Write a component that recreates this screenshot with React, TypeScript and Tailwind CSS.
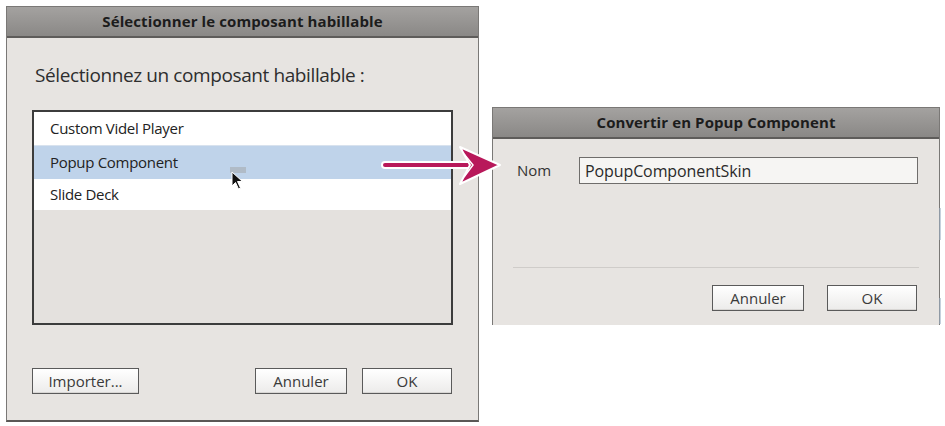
import React from "react";

const font = { fontFamily: '"Open Sans", "Noto Sans", sans-serif' };

function Btn({ label, w }: { label: string; w: string }) {
  return (
    <div
      className={`h-[26px] ${w} flex items-center justify-center border border-[#5a5a5a] bg-gradient-to-b from-[#ffffff] to-[#ecebea] text-[15px] text-[#3a3a3a] shadow-[inset_0_-1px_0_#d8d6d4]`}
    >
      {label}
    </div>
  );
}

function TitleBar({ text }: { text: string }) {
  return (
    <div className="h-[31px] flex items-center justify-center bg-gradient-to-b from-[#a4a2a0] to-[#8a8886] border-b-2 border-[#5e5c5a] text-[15px] font-bold text-[#1c1c1c] tracking-[0.1px]">
      {text}
    </div>
  );
}

export default function App() {
  return (
    <div
      className="relative w-[945px] h-[426px] bg-white overflow-hidden"
      style={font}
    >
      <div className="flex items-start pl-[6px] pt-[6px] gap-[13px]">
        {/* Left dialog */}
        <div className="w-[473px] h-[416px] flex flex-col bg-[#e7e4e1] border border-[#7a7876] border-b-2 border-b-[#5a5856]">
          <TitleBar text="Sélectionner le composant habillable" />
          <div className="flex-1 flex flex-col pl-[25px] pr-[25px]">
            <div className="mt-[24px] h-[26px] flex items-center pl-[3px] text-[19px] text-[#2e2e2e] tracking-[-0.4px]">
              Sélectionnez un composant habillable :
            </div>
            <div className="mt-[22px] w-[421px] h-[215px] border-2 border-[#3c3c3c] bg-[#e4e1de] flex flex-col">
              <div className="h-[33px] bg-white flex items-center pl-[16px] text-[15px] text-[#222] tracking-[-0.3px]">
                Custom Videl Player
              </div>
              <div className="h-[34px] bg-[#bfd3ea] border-t border-[#d8e2ee] flex items-center pl-[16px] text-[15px] text-[#222] tracking-[-0.3px]">
                Popup Component
              </div>
              <div className="h-[31px] bg-white flex items-center pl-[16px] text-[15px] text-[#222] tracking-[-0.3px]">
                Slide Deck
              </div>
            </div>
            <div className="mt-[43px] flex items-center">
              <Btn label="Importer..." w="w-[107px]" />
              <div className="ml-auto flex gap-[15px] mr-[1px]">
                <Btn label="Annuler" w="w-[92px]" />
                <Btn label="OK" w="w-[90px]" />
              </div>
            </div>
          </div>
        </div>

        {/* Right dialog */}
        <div className="mt-[101px] w-[448px] h-[218px] flex flex-col bg-[#e7e4e1] border-x border-t border-[#7a7876]">
          <TitleBar text="Convertir en Popup Component" />
          <div className="flex items-center mt-[18px] pl-[24px]">
            <div className="w-[62px] text-[15px] text-[#333]">Nom</div>
            <div className="w-[339px] h-[27px] border border-[#6f6d6b] bg-[#f6f5f3] flex items-center pl-[5px] text-[16px] text-[#2a2a2a] tracking-[-0.1px]">
              PopupComponentSkin
            </div>
          </div>
          <div className="mt-[83px] mx-[20px] h-[1px] bg-[#cfccc9]" />
          <div className="mt-[17px] flex justify-end gap-[23px] pr-[22px]">
            <Btn label="Annuler" w="w-[92px]" />
            <Btn label="OK" w="w-[90px]" />
          </div>
        </div>
      </div>

      {/* Arrow overlay */}
      <svg
        className="absolute left-[378px] top-[140px]"
        width="130"
        height="52"
        viewBox="0 0 130 52"
      >
        <line
          x1="7"
          y1="25"
          x2="95"
          y2="25"
          stroke="#ffffff"
          strokeWidth="8"
          strokeLinecap="round"
        />
        <line
          x1="7"
          y1="25"
          x2="95"
          y2="25"
          stroke="#b8185a"
          strokeWidth="4"
          strokeLinecap="round"
        />
        <polygon
          points="82,7 122,25 82,44 92,25"
          fill="#b8185a"
          stroke="#ffffff"
          strokeWidth="2"
          strokeLinejoin="round"
        />
        <polyline
          points="86,14 95,25 86,37"
          fill="none"
          stroke="#ffffff"
          strokeWidth="1.5"
        />
      </svg>

      {/* Cursor */}
      <div className="absolute left-[230px] top-[167px] w-[16px] h-[6px] bg-[#a9b0b8] opacity-70" />
      <svg
        className="absolute left-[231px] top-[171px]"
        width="14"
        height="20"
        viewBox="0 0 14 20"
      >
        <path
          d="M1 1 L1 15 L4.5 11.5 L7.5 18 L9.5 17 L6.5 10.5 L11.5 10.5 Z"
          fill="#111"
          stroke="#ffffff"
          strokeWidth="1"
        />
      </svg>

      {/* faint marks on far right */}
      <div className="absolute left-[939px] top-[208px] w-[2px] h-[32px] bg-[#9fb0c4] opacity-60" />
      <div className="absolute left-[939px] top-[298px] w-[2px] h-[26px] bg-[#9fb0c4] opacity-60" />
    </div>
  );
}
